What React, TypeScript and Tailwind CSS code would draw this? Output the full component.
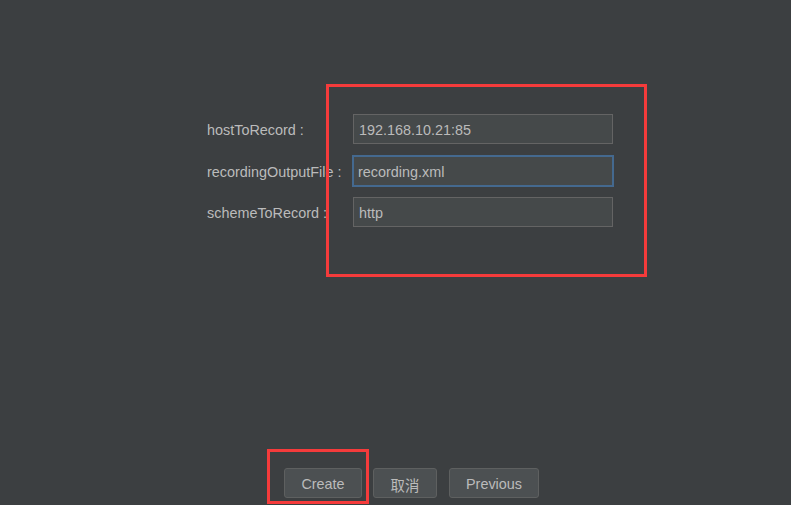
import React from 'react'

const font = { fontFamily: '"Liberation Sans", Arial, sans-serif' }

function Field({ label, value, focused }: { label: string; value: string; focused?: boolean }) {
  return (
    <>
      <label className="flex items-center pt-[4px] text-[14.4px] text-[#bbbbbb] h-[30px]">{label}</label>
      <div
        className={
          focused
            ? 'h-[32px] -my-px -mx-px flex items-center pt-[4px] border-2 border-[#44698f] bg-[#45494a] px-[4px] text-[14.4px] text-[#bbbbbb]'
            : 'h-[30px] flex items-center pt-[4px] border border-[#646464] bg-[#45494a] px-[5px] text-[14.4px] text-[#bbbbbb]'
        }
      >
        {value}
      </div>
    </>
  )
}

function Button({ children, w }: { children: React.ReactNode; w: string }) {
  return (
    <button
      className={`${w} h-[30px] pt-[4px] rounded-[3px] border border-[#5e6060] bg-[#4c5052] text-[14.4px] text-[#bbbbbb] flex items-center justify-center`}
    >
      {children}
    </button>
  )
}

export default function App() {
  return (
    <div className="relative w-[791px] h-[505px] bg-[#3c3f41] flex flex-col overflow-hidden" style={font}>
      <div className="pt-[114px] pl-[207px] grid grid-cols-[146px_260px] gap-y-[11.5px]">
        <Field label="hostToRecord :" value="192.168.10.21:85" />
        <Field label="recordingOutputFile :" value="recording.xml" focused />
        <Field label="schemeToRecord :" value="http" />
      </div>

      <div className="mt-auto mb-[7px] pl-[284px] flex">
        <Button w="w-[78px]">Create</Button>
        <div className="ml-[11px]">
          <Button w="w-[64px]">
            <span style={{ fontFamily: '"Noto Sans CJK SC", "Liberation Sans", sans-serif' }}>取消</span>
          </Button>
        </div>
        <div className="ml-[12px]">
          <Button w="w-[90px]">Previous</Button>
        </div>
      </div>

      {/* annotation boxes */}
      <div className="absolute left-[326px] top-[84px] w-[321px] h-[193px] border-[3px] border-[#f53b3b]" />
      <div className="absolute left-[267px] top-[449px] w-[102px] h-[55px] border-[3px] border-[#f53b3b]" />
    </div>
  )
}
